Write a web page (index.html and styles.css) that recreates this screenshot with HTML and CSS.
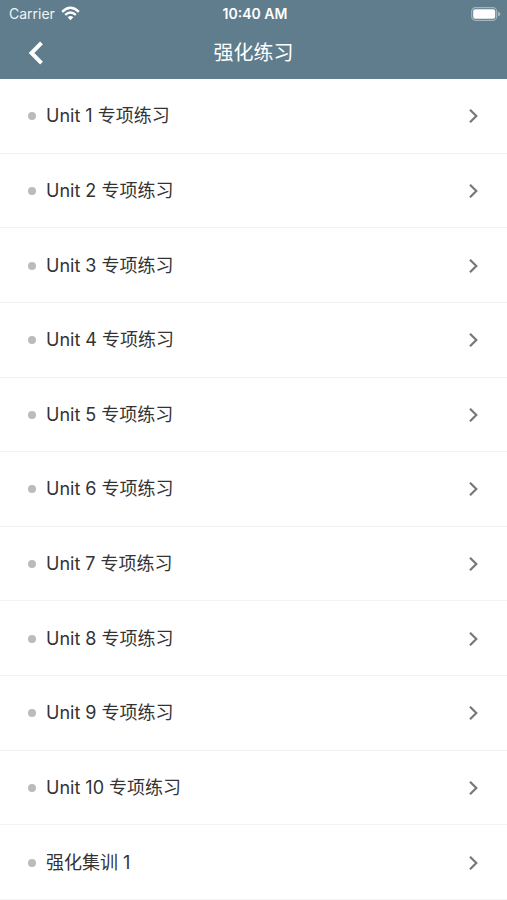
FILE: index.html
```html
<!DOCTYPE html>
<html lang="zh-CN">
<head>
<meta charset="utf-8">
<meta name="viewport" content="width=device-width, initial-scale=1">
<title>强化练习</title>
<link rel="stylesheet" href="styles.css">
</head>
<body>
<svg class="defs" aria-hidden="true"><symbol id="chevron" viewBox="0 0 12 16"><path d="M2 1.7 8.3 8 2 14.3" fill="none" stroke="currentColor" stroke-width="2.2"/></symbol></svg>
<header class="header">
  <div class="status">
    <div class="carrier"><span>Carrier</span>
      <svg class="wifi" viewBox="0 0 20 15" aria-hidden="true"><g fill="none" stroke="currentColor" stroke-width="2.5"><path d="M1.2 5.7Q10-2.6 18.8 5.7"/><path d="M4.4 9Q10 4 15.6 9"/></g><path d="M7 11.5Q10 8.8 13 11.5L10 14.5Z" fill="currentColor"/></svg>
    </div>
    <span class="time">10:40 AM</span>
    <svg class="battery" viewBox="0 0 30 14" aria-hidden="true"><rect x=".7" y=".7" width="25" height="12.6" rx="3.8" fill="none" stroke="#a3b4be" stroke-width="1.2"/><rect x="2.2" y="2.2" width="22" height="9.6" rx="2" fill="#fff"/><path d="M27 4.500v5q2.500-1 2.500-2.500T27 4.500" fill="#a3b4be"/></svg>
  </div>
  <nav class="nav">
    <button class="back" type="button" aria-label="返回"><svg viewBox="0 0 16 24" aria-hidden="true"><path d="M13.5 1.8 3.5 12l10 10.2" fill="none" stroke="currentColor" stroke-width="4"/></svg></button>
    <h1>强化练习</h1>
  </nav>
</header>
<main>
  <ul class="list">
    <li><a href="#u1"><span>Unit 1 专项练习</span><svg aria-hidden="true"><use href="#chevron"/></svg></a></li>
    <li><a href="#u2"><span>Unit 2 专项练习</span><svg aria-hidden="true"><use href="#chevron"/></svg></a></li>
    <li><a href="#u3"><span>Unit 3 专项练习</span><svg aria-hidden="true"><use href="#chevron"/></svg></a></li>
    <li><a href="#u4"><span>Unit 4 专项练习</span><svg aria-hidden="true"><use href="#chevron"/></svg></a></li>
    <li><a href="#u5"><span>Unit 5 专项练习</span><svg aria-hidden="true"><use href="#chevron"/></svg></a></li>
    <li><a href="#u6"><span>Unit 6 专项练习</span><svg aria-hidden="true"><use href="#chevron"/></svg></a></li>
    <li><a href="#u7"><span>Unit 7 专项练习</span><svg aria-hidden="true"><use href="#chevron"/></svg></a></li>
    <li><a href="#u8"><span>Unit 8 专项练习</span><svg aria-hidden="true"><use href="#chevron"/></svg></a></li>
    <li><a href="#u9"><span>Unit 9 专项练习</span><svg aria-hidden="true"><use href="#chevron"/></svg></a></li>
    <li><a href="#u10"><span>Unit 10 专项练习</span><svg aria-hidden="true"><use href="#chevron"/></svg></a></li>
    <li><a href="#t1"><span>强化集训 1</span><svg aria-hidden="true"><use href="#chevron"/></svg></a></li>
  </ul>
</main>
</body>
</html>
```
FILE: styles.css
```css
* { box-sizing: border-box; }
body { margin: 0; min-height: 100vh; background: #fff; color: #333; font-family: Inter, "Noto Sans CJK SC", sans-serif; display: flex; flex-direction: column; }
.defs { position: absolute; width: 0; height: 0; }
.header { background: #5f7d8c; color: #fff; }
.status { display: grid; grid-template-columns: 1fr auto 1fr; align-items: center; height: 27px; padding: 0 6px 0 9px; font-size: 14px; }
.carrier { display: flex; align-items: center; gap: 6px; color: #f0f4f6; }
.wifi { width: 19px; height: 15px; color: #fff; }
.time { font-weight: 600; }
.battery { width: 30px; height: 14px; justify-self: end; }
.nav { display: grid; grid-template-columns: 72px 1fr 72px; align-items: center; height: 52px; }
.nav h1 { margin: 0; font-size: 20px; line-height: 28px; font-weight: 400; text-align: center; }
.back { display: flex; align-items: center; justify-content: center; height: 48px; padding: 0; border: 0; background: none; color: #fff; }
.back svg { width: 16px; height: 24px; }
main { flex: 1; display: flex; }
.list { flex: 1; display: grid; grid-auto-rows: 1fr; margin: 0; padding: 0; list-style: none; }
.list li { border-bottom: 1px solid #f3f3f3; display: flex; }
.list a { flex: 1; display: flex; align-items: center; min-height: 64px; padding: 1px 27px 0 28px; color: inherit; text-decoration: none; font-size: 18px; line-height: 28px; }
.list a::before { content: ""; width: 8px; height: 8px; margin-right: 10px; border-radius: 50%; background: #bbb; }
.list span { flex: 1; }
.list svg { width: 12px; height: 16px; color: #777; }
```
